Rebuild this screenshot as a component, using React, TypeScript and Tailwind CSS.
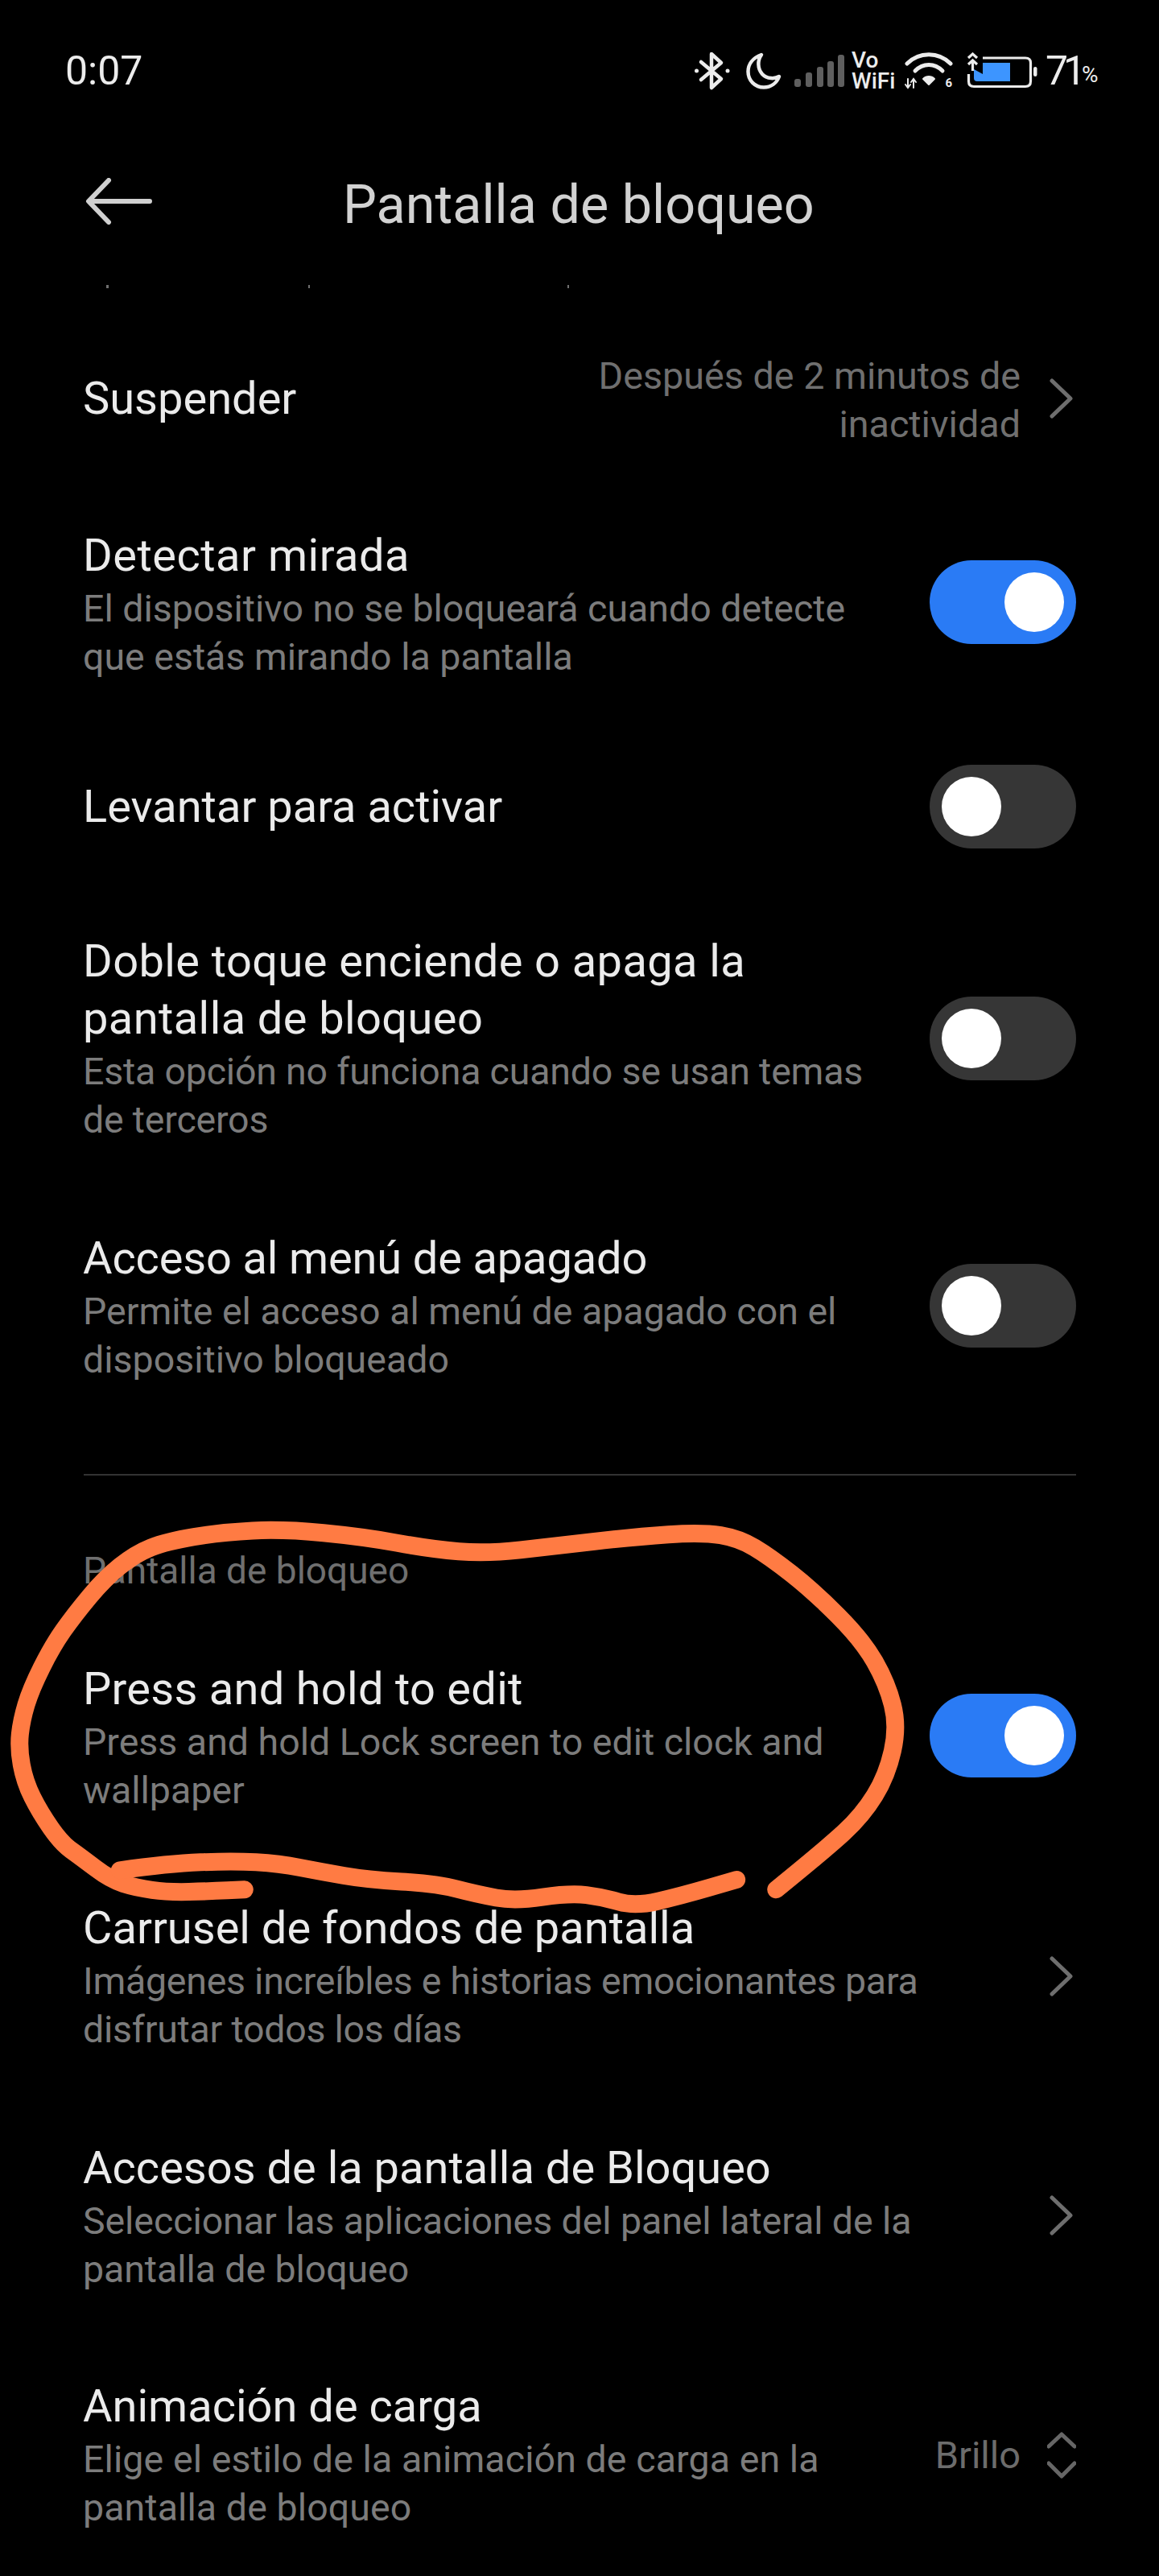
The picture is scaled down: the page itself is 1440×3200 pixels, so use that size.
import React from "react";

const Z = (p: number[][]) => p.map(([x, y]) => [x / 1.3067, 1800 + y / 2.613]);
const B = (p: number[][]) => p.map(([x, y]) => [100 + x / 1.742, 2260 + y / 3]);
function smooth(pts: number[][]) {
  let d = `M${pts[0][0]} ${pts[0][1]}`;
  for (let i = 1; i < pts.length - 1; i++) {
    const mx = (pts[i][0] + pts[i + 1][0]) / 2;
    const my = (pts[i][1] + pts[i + 1][1]) / 2;
    d += ` Q${pts[i][0]} ${pts[i][1]} ${mx} ${my}`;
  }
  const l = pts[pts.length - 1];
  return d + ` L${l[0]} ${l[1]}`;
}
const loopA = [
  ...Z([[1260,1430],[1340,1300],[1400,1190],[1440,1060],[1458,900],[1440,760],[1400,620],[1320,460],[1250,350],[1200,290],[1140,270],[1030,285],[900,315],[790,340],[700,325],[590,285],[460,260],[360,270],[270,300],[220,340],[170,420],[120,540],[85,640],[50,780],[35,880],[30,970],[40,1080],[65,1180],[100,1280]]),
  ...B([[0,140],[65,225],[120,255],[190,272],[280,268],[355,262]]),
];
const loopB = B([[85,190],[190,165],[330,155],[430,165],[520,195],[620,225],[770,240],[860,280],[940,305],[1060,275],[1130,290],[1200,325],[1300,285],[1420,225]]);

function Toggle({ on, cls = "" }: { on?: boolean; cls?: string }) {
  return (
    <div className={`flex h-[104px] w-[182px] shrink-0 items-center rounded-full px-[15px] ${on ? "justify-end bg-[#2a7bf5]" : "justify-start bg-[#363636]"} ${cls}`}>
      <div className="h-[74px] w-[74px] rounded-full bg-white" />
    </div>
  );
}
function Chevron({ cls = "" }: { cls?: string }) {
  return (
    <svg width="30" height="52" viewBox="0 0 30 52" className={`mr-[4px] shrink-0 ${cls}`}>
      <path d="M4 4 L27 26 L4 48" fill="none" stroke="#6e6e6e" strokeWidth="5" strokeLinecap="round" strokeLinejoin="round" />
    </svg>
  );
}
function Row({ title, sub, trailing, cls, titleCls = "", subCls = "" }: { title: React.ReactNode; sub?: React.ReactNode; trailing?: React.ReactNode; cls: string; titleCls?: string; subCls?: string }) {
  return (
    <div className={`flex items-center justify-between pl-[103px] pr-[103px] ${cls}`}>
      <div className="min-w-0">
        <div className={`text-[56px] leading-[71px] text-[#ebebeb] ${titleCls}`}>{title}</div>
        {sub && <div className={`text-[46.5px] leading-[60px] text-[#7c7c7c] ${subCls}`}>{sub}</div>}
      </div>
      {trailing}
    </div>
  );
}

function StatusIcons() {
  return (
    <div className="flex items-center">
      <svg width="46" height="50" viewBox="0 0 46 50" fill="none" stroke="#ececec" strokeWidth="4.5" strokeLinejoin="round" strokeLinecap="round">
        <path d="M9 14 L34 35 L22 46 V4 L34 15 L9 36" />
        <circle cx="3.5" cy="25" r="2.5" fill="#ececec" stroke="none" />
        <circle cx="42" cy="25" r="2.5" fill="#ececec" stroke="none" />
      </svg>
      <svg className="ml-[19px]" width="44" height="46" viewBox="0 0 44 46" fill="none">
        <path d="M19 3 C8 7 2.5 15 2.5 24 C2.5 35 11 43.5 22 43.5 C31 43.5 38 38 41 30 C36 33 26 33.5 20 27 C14 20 14 10 19 3 Z" stroke="#ececec" strokeWidth="4.5" strokeLinejoin="round" />
      </svg>
      <svg className="ml-[16px]" width="62" height="40" viewBox="0 0 62 40" fill="#5f5f5f">
        <rect x="0" y="30" width="8" height="10" rx="3" />
        <rect x="14" y="22" width="8" height="18" rx="3" />
        <rect x="28" y="15" width="8" height="25" rx="3" />
        <rect x="41" y="8" width="8" height="32" rx="3" />
        <rect x="54" y="0" width="8" height="40" rx="3" />
      </svg>
      <div className="ml-[9px] w-[54px] text-[28px] leading-[26px] font-medium text-[#ececec]">
        Vo<br />WiFi
      </div>
      <div className="relative ml-[12px] h-[46px] w-[60px]">
        <svg width="60" height="46" viewBox="0 0 60 46" fill="none" stroke="#ececec" strokeLinecap="round">
          <path d="M3 14 C18 -1 42 -1 57 14" strokeWidth="5" />
          <path d="M13 23 C23 13 37 13 47 23" strokeWidth="5" />
          <path d="M30 40 L23 33 C27 29 33 29 37 33 Z" fill="#ececec" stroke="#ececec" strokeWidth="2" strokeLinejoin="round" />
          <path d="M4 33 V44 M1 40 L4 44 L7 40 M11 44 V33 M8 37 L11 33 L14 37" strokeWidth="2" />
        </svg>
        <span className="absolute right-[1px] bottom-0 text-[15px] leading-[15px] font-bold text-[#ececec]">6</span>
      </div>
      <svg className="ml-[17px]" width="88" height="46" viewBox="0 0 88 46" fill="none">
        <path d="M2.5 27 V36 Q2.5 42.5 9 42.5 H73 Q79.5 42.5 79.5 36 V13 Q79.5 7 73 7 H20" stroke="#ececec" strokeWidth="3.2" />
        <path d="M20 13 H54 V36 H13 Q9 36 9 32 V21 L20 27 Z" fill="#3d95ff" />
        <path d="M2 7 L7.5 2 L13 7 M2 15 L7.5 10 L13 15 M7.5 11 V23" stroke="#ececec" strokeWidth="3.2" />
        <rect x="83" y="18" width="4.5" height="12" rx="2.2" fill="#ececec" />
      </svg>
      <span className="ml-[10px] w-[41px] text-[50px] leading-[56px] tracking-[-6px] text-[#ececec]">71</span>
      <span className="mt-[10px] ml-[4px] w-[24px] text-[28px] leading-[32px] text-[#ececec]">%</span>
    </div>
  );
}

export default function App() {
  return (
    <div className="relative h-[3200px] w-[1440px] overflow-hidden bg-black font-['Roboto',sans-serif]">
      <div className="flex h-[56px] items-center justify-between pr-[72px] pl-[81px] mt-[60px]">
        <span className="text-[50px] leading-[56px] text-[#ececec]">0:07</span>
        <StatusIcons />
      </div>
      <div className="mt-[102px] flex h-[72px] items-center pl-[106px]">
        <svg className="-mt-[8px]" width="84" height="58" viewBox="0 0 84 58" fill="none" stroke="#d0d0d0" strokeWidth="6" strokeLinecap="round" strokeLinejoin="round">
          <path d="M80 29 H5 M29 3 L4 29 L29 55" />
        </svg>
        <span className="ml-[236px] text-[66.5px] leading-[72px] text-[#d2d2d2]">Pantalla de bloqueo</span>
      </div>
      <div className="mt-[64px] flex h-[4px] pl-[132px]">
        <span className="h-[4px] w-[3px] bg-[#6f6f6f]" />
        <span className="ml-[248px] h-[4px] w-[2px] bg-[#6f6f6f]" />
        <span className="ml-[320px] h-[4px] w-[2px] bg-[#6f6f6f]" />
      </div>
      <div className="flex flex-col">
        <Row
          cls="mt-[77px] h-[120px]"
          title="Suspender"
          trailing={
            <div className="flex items-center gap-[35px]">
              <div className="pt-[3px] text-right text-[46.7px] leading-[60px] text-[#6f6f6f]">Después de 2 minutos de<br />inactividad</div>
              <Chevron />
            </div>
          }
        />
        <Row cls="mt-[100px]" titleCls="tracking-[0.5px]" title="Detectar mirada" sub={<>El dispositivo no se bloqueará cuando detecte<br />que estás mirando la pantalla</>} trailing={<Toggle on cls="mb-[6px]" />} />
        <Row cls="mt-[104px]" title="Levantar para activar" trailing={<Toggle />} />
        <Row cls="mt-[105px]" titleCls="tracking-[0.4px]" subCls="tracking-[-0.2px]" title={<>Doble toque enciende o apaga la<br />pantalla de bloqueo</>} sub={<>Esta opción no funciona cuando se usan temas<br />de terceros</>} trailing={<Toggle />} />
        <Row cls="mt-[107px]" titleCls="tracking-[-0.15px]" title="Acceso al menú de apagado" sub={<>Permite el acceso al menú de apagado con el<br />dispositivo bloqueado</>} trailing={<Toggle cls="mb-[3px]" />} />
      </div>
      <div className="mt-[112px] mr-[103px] ml-[104px] h-[2px] bg-[#333333]" />
      <div className="mt-[88px] pl-[103px] text-[46px] leading-[60px] text-[#6f6f6f]">Pantalla de bloqueo</div>
      <div className="flex flex-col">
        <Row cls="mt-[82px]" titleCls="tracking-[0.27px]" title="Press and hold to edit" sub={<>Press and hold Lock screen to edit clock and<br />wallpaper</>} trailing={<Toggle on cls="mb-[6px]" />} />
        <Row cls="mt-[106px]" subCls="tracking-[-0.25px]" title="Carrusel de fondos de pantalla" sub={<>Imágenes increíbles e historias emocionantes para<br />disfrutar todos los días</>} trailing={<Chevron cls="mb-[2px]" />} />
        <Row cls="mt-[107px]" subCls="tracking-[-0.08px]" title="Accesos de la pantalla de Bloqueo" sub={<>Seleccionar las aplicaciones del panel lateral de la<br />pantalla de bloqueo</>} trailing={<Chevron cls="mb-[4px]" />} />
        <Row
          cls="mt-[105px]"
          subCls="tracking-[0.09px]"
          title="Animación de carga"
          sub={<>Elige el estilo de la animación de carga en la<br />pantalla de bloqueo</>}
          trailing={
            <div className="flex items-center gap-[33px]">
              <span className="text-[47px] leading-[60px] text-[#6c6c6c]">Brillo</span>
              <svg width="36" height="58" viewBox="0 0 36 58" fill="none" stroke="#666666" strokeWidth="5" strokeLinecap="round" strokeLinejoin="round">
                <path d="M2 18 L18 3 L34 18 M2 39 L18 55 L34 39" />
              </svg>
            </div>
          }
        />
      </div>
      <svg className="pointer-events-none absolute top-0 left-0" width="1440" height="3200" fill="none" stroke="#ff7b43" strokeWidth="22" strokeLinecap="round" strokeLinejoin="round">
        <path d={smooth(loopA)} />
        <path d={smooth(loopB)} />
      </svg>
    </div>
  );
}
